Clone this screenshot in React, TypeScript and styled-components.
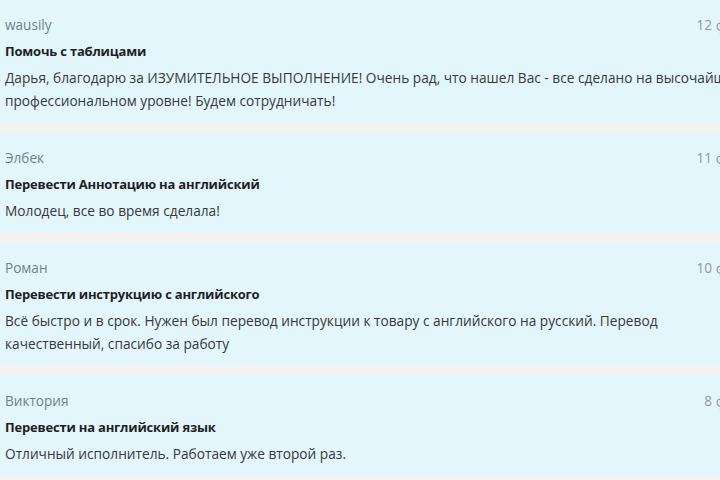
import styled, { createGlobalStyle } from 'styled-components';

const GlobalStyle = createGlobalStyle`
    html, body {
        margin: 0;
        padding: 0;
        overflow: hidden;
        background: #f2f2f1;
    }
`;

interface Review {
    author: string;
    date: string;
    title: string;
    text: string;
}

const reviews: Review[] = [
    {
        author: 'wausily',
        date: '12 февраля',
        title: 'Помочь с таблицами',
        text: 'Дарья, благодарю за ИЗУМИТЕЛЬНОЕ ВЫПОЛНЕНИЕ! Очень рад, что нашел Вас - все сделано на высочайшем профессиональном уровне! Будем сотрудничать!',
    },
    {
        author: 'Элбек',
        date: '11 февраля',
        title: 'Перевести Аннотацию на английский',
        text: 'Молодец, все во время сделала!',
    },
    {
        author: 'Роман',
        date: '10 февраля',
        title: 'Перевести инструкцию с английского',
        text: 'Всё быстро и в срок. Нужен был перевод инструкции к товару с английского на русский. Перевод качественный, спасибо за работу',
    },
    {
        author: 'Виктория',
        date: '8 февраля',
        title: 'Перевести на английский язык',
        text: 'Отличный исполнитель. Работаем уже второй раз.',
    },
];

const App: React.FC = () => {
    return (
        <>
            <GlobalStyle />
            <ReviewList>
                { reviews.map((review) => (
                    <ReviewCard key={ review.author }>
                        <CardHeader>
                            <Author>{ review.author }</Author>
                            <ReviewDate>{ review.date }</ReviewDate>
                        </CardHeader>
                        <OrderTitle>{ review.title }</OrderTitle>
                        <ReviewText>{ review.text }</ReviewText>
                    </ReviewCard>
                )) }
            </ReviewList>
        </>
    );
}

const ReviewList = styled.div`
    display: flex;
    flex-direction: column;
    gap: 11px;
    width: 790px;
    font-family: "Open Sans", "Liberation Sans", sans-serif;
    font-size: 14px;
`

const ReviewCard = styled.div`
    background: #e3f6fc;
    padding: 12px 18px 10px 5px;
`

const CardHeader = styled.div`
    display: flex;
    justify-content: space-between;
    align-items: center;
    height: 24px;
    font-size: 13.6px;
`

const Author = styled.span`
    color: #6b848b;
`

const ReviewDate = styled.span`
    color: #8f999d;
`

const OrderTitle = styled.div`
    margin-top: 3px;
    line-height: 24px;
    font-size: 13px;
    font-weight: 700;
    letter-spacing: -0.2px;
    color: #1f1f1f;
`

const ReviewText = styled.div`
    max-width: 750px;
    margin-top: 3px;
    line-height: 23px;
    font-size: 13.7px;
    color: #383838;
`

export default App;
